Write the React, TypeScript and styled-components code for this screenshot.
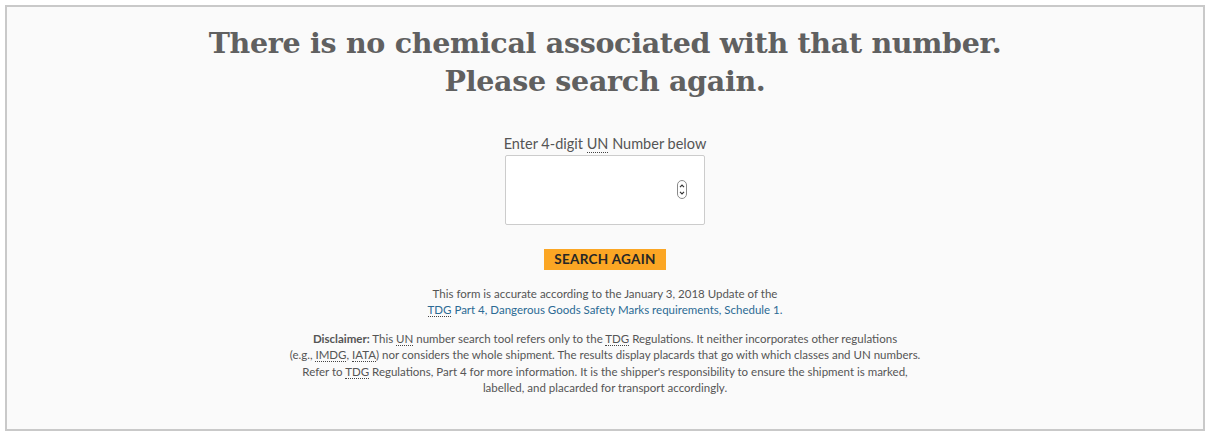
import styled, { createGlobalStyle } from "styled-components";

const GlobalStyle = createGlobalStyle`
  html, body {
    margin: 0;
    padding: 0;
    background: #ffffff;
  }
  body {
    font-family: "Lato", "Liberation Sans", sans-serif;
    color: #555555;
  }
`;

const Page = styled.div`
  padding: 5px;
`;

const Panel = styled.section`
  box-sizing: border-box;
  width: 1200px;
  height: 426px;
  border: 2px solid #c9c9c9;
  background: #fafafa;
  display: flex;
  flex-direction: column;
  align-items: center;
  padding-top: 17px;
`;

const Heading = styled.h1`
  margin: 0;
  font-family: "DejaVu Serif", "Liberation Serif", serif;
  font-weight: bold;
  font-size: 28.5px;
  line-height: 38px;
  letter-spacing: -0.3px;
  color: #606060;
  text-align: center;
`;

const Form = styled.form`
  display: flex;
  flex-direction: column;
  align-items: center;
  margin-top: 35px;
`;

const Label = styled.label`
  font-size: 14.5px;
  line-height: 18px;
  color: #555555;
`;

const Abbr = styled.abbr`
  text-decoration: none;
  border-bottom: 1px dotted #444444;
`;

const InputBox = styled.div`
  position: relative;
  box-sizing: border-box;
  width: 200px;
  height: 70px;
  margin-top: 2px;
  border: 1px solid #cccccc;
  border-radius: 2px;
  background: #ffffff;
`;

const Spinner = styled.span`
  position: absolute;
  right: 17px;
  top: 24px;
  width: 10px;
  height: 19px;
`;

const Button = styled.button`
  margin-top: 24px;
  height: 21px;
  padding: 0 10px;
  border: none;
  background: #fba624;
  color: #262626;
  font-family: "Lato", "Liberation Sans", sans-serif;
  font-weight: bold;
  font-size: 13.5px;
  letter-spacing: 0.3px;
  line-height: 21px;
  cursor: pointer;
`;

const Note = styled.p<{ $gap: number }>`
  margin: ${(p) => p.$gap}px 0 0;
  font-size: 11.5px;
  line-height: 16.4px;
  color: #555555;
  text-align: center;
`;

const Link = styled.a`
  color: #2b6a94;
  text-decoration: none;
`;

const Strong = styled.strong`
  font-weight: bold;
`;

function SpinnerIcon() {
  return (
    <svg width="10" height="19" viewBox="0 0 10 19">
      <rect x="0.5" y="0.5" width="9" height="18" rx="4.5" fill="#fff" stroke="#8a8a8a" />
      <path d="M3 7.2 L5 5.2 L7 7.2" fill="none" stroke="#333" strokeWidth="1.2" />
      <path d="M3 11.8 L5 13.8 L7 11.8" fill="none" stroke="#333" strokeWidth="1.2" />
    </svg>
  );
}

export default function App() {
  return (
    <>
      <GlobalStyle />
      <Page>
        <Panel>
          <Heading>
            There is no chemical associated with that number.
            <br />
            Please search again.
          </Heading>
          <Form onSubmit={(e) => e.preventDefault()}>
            <Label>
              Enter 4-digit <Abbr title="United Nations">UN</Abbr> Number below
            </Label>
            <InputBox>
              <Spinner>
                <SpinnerIcon />
              </Spinner>
            </InputBox>
            <Button type="submit">SEARCH AGAIN</Button>
          </Form>
          <Note $gap={16}>
            This form is accurate according to the January 3, 2018 Update of the
            <br />
            <Link href="#">
              <Abbr title="Transportation of Dangerous Goods">TDG</Abbr> Part 4, Dangerous Goods Safety
              Marks requirements, Schedule 1.
            </Link>
          </Note>
          <Note $gap={12}>
            <Strong>Disclaimer:</Strong> This <Abbr>UN</Abbr> number search tool refers only to the{" "}
            <Abbr>TDG</Abbr> Regulations. It neither incorporates other regulations
            <br />
            (e.g., <Abbr>IMDG</Abbr>, <Abbr>IATA</Abbr>) nor considers the whole shipment. The
            results display placards that go with which classes and UN numbers.
            <br />
            Refer to <Abbr>TDG</Abbr> Regulations, Part 4 for more information. It is the
            shipper's responsibility to ensure the shipment is marked,
            <br />
            labelled, and placarded for transport accordingly.
          </Note>
        </Panel>
      </Page>
    </>
  );
}
